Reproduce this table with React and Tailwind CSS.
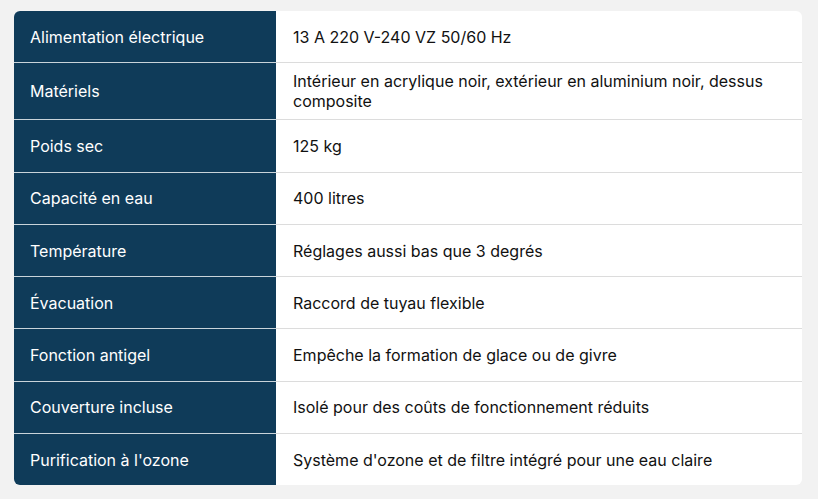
import React from 'react'

const specs = [
  ['Alimentation électrique', '13 A 220 V-240 VZ 50/60 Hz'],
  ['Matériels', 'Intérieur en acrylique noir, extérieur en aluminium noir, dessus composite'],
  ['Poids sec', '125 kg'],
  ['Capacité en eau', '400 litres'],
  ['Température', 'Réglages aussi bas que 3 degrés'],
  ['Évacuation', 'Raccord de tuyau flexible'],
  ['Fonction antigel', 'Empêche la formation de glace ou de givre'],
  ['Couverture incluse', 'Isolé pour des coûts de fonctionnement réduits'],
  ['Purification à l\'ozone', 'Système d\'ozone et de filtre intégré pour une eau claire'],
]

export default function App() {
  return (
    <div className="min-h-[499px] bg-[#f2f2f2] pt-[11px] pl-[14px] pr-[16px]" style={{ fontFamily: 'Inter, "Noto Sans", sans-serif' }}>
      <div className="w-[788px] rounded-md overflow-hidden bg-white">
        {specs.map(([label, value], i) => (
          <div key={label} className={`flex ${i > 0 ? 'border-t border-[#dcdcdc]' : ''}`}>
            <div className={`w-[262px] shrink-0 bg-[#0f3b59] text-white text-base leading-5 px-4 py-2 min-h-[51.3px] flex items-center ${i > 0 ? 'border-t border-[#c9d3da] -mt-px' : ''}`}>
              {label}
            </div>
            <div className="flex-1 text-[#111] text-base leading-5 pl-[17px] pr-6 py-2 min-h-[51.3px] flex items-center">
              {value}
            </div>
          </div>
        ))}
      </div>
    </div>
  )
}
